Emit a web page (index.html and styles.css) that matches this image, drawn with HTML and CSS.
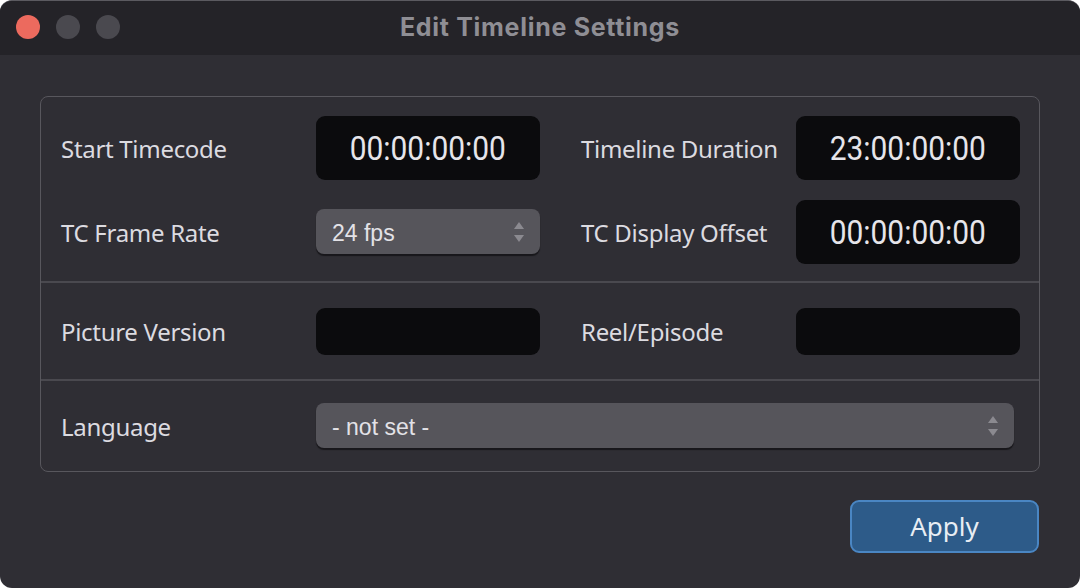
FILE: index.html
```html
<!DOCTYPE html>
<html>
<head>
<meta charset="utf-8">
<link rel="stylesheet" href="styles.css">
</head>
<body>
<div class="window">
  <div class="titlebar">
    <div class="lights">
      <span class="light red"></span>
      <span class="light"></span>
      <span class="light"></span>
    </div>
    <div class="title">Edit Timeline Settings</div>
  </div>
  <div class="content">
    <div class="panel">
      <div class="section grid two-rows">
        <div class="label">Start Timecode</div>
        <div class="tc big"><span class="digits">00:00:00:00</span></div>
        <div class="label right">Timeline Duration</div>
        <div class="tc big"><span class="digits">23:00:00:00</span></div>
        <div class="label">TC Frame Rate</div>
        <div class="select">
          <span class="value">24 fps</span>
          <svg class="arrows" width="12" height="24" viewBox="0 0 12 24"><path d="M6 2 L11 9 L1 9 Z" fill="#8b8a90"/><path d="M1 15 L11 15 L6 22 Z" fill="#8b8a90"/></svg>
        </div>
        <div class="label right">TC Display Offset</div>
        <div class="tc big"><span class="digits">00:00:00:00</span></div>
      </div>
      <div class="section grid mid">
        <div class="label">Picture Version</div>
        <div class="tc small"></div>
        <div class="label right">Reel/Episode</div>
        <div class="tc small"></div>
      </div>
      <div class="section grid last">
        <div class="label">Language</div>
        <div class="select wide">
          <span class="value">- not set -</span>
          <svg class="arrows" width="12" height="24" viewBox="0 0 12 24"><path d="M6 2 L11 9 L1 9 Z" fill="#8b8a90"/><path d="M1 15 L11 15 L6 22 Z" fill="#8b8a90"/></svg>
        </div>
      </div>
    </div>
    <div class="actions">
      <button class="apply">Apply</button>
    </div>
  </div>
</div>
</body>
</html>
```
FILE: styles.css
```css
html, body {
  margin: 0;
  padding: 0;
  background: #ffffff;
}
.window {
  width: 1080px;
  height: 588px;
  background: #2f2e34;
  border-radius: 12px;
  overflow: hidden;
  box-sizing: border-box;
  border-top: 1px solid #5b5a60;
  display: flex;
  flex-direction: column;
}
.titlebar {
  height: 54px;
  background: #242328;
  display: flex;
  align-items: center;
  position: relative;
  flex: none;
}
.lights {
  display: flex;
  gap: 16px;
  padding-left: 16px;
  margin-top: -2px;
}
.light {
  width: 24px;
  height: 24px;
  border-radius: 50%;
  background: #4a494f;
}
.light.red {
  background: #ec6a5e;
}
.title {
  position: absolute;
  left: 0;
  right: 0;
  top: 0;
  bottom: 0;
  display: flex;
  align-items: center;
  justify-content: center;
  font-family: Inter, "Noto Sans", sans-serif;
  font-weight: 700;
  font-size: 25px;
  letter-spacing: 0.7px;
  color: #8f8e94;
  margin-top: -2px;
}
.content {
  padding: 41px 40px 0 40px;
  display: flex;
  flex-direction: column;
}
.panel {
  border: 1px solid #58575d;
  border-radius: 8px;
  height: 376px;
  box-sizing: border-box;
  display: flex;
  flex-direction: column;
}
.section {
  padding: 0 19px 0 20px;
  box-sizing: border-box;
}
.section + .section {
  border-top: 2px solid #4a494f;
}
.grid {
  display: grid;
  grid-template-columns: 255px 224px 1fr 224px;
  align-items: center;
}
.two-rows {
  height: 184px;
  row-gap: 20px;
  align-content: center;
  padding-top: 2px;
}
.mid {
  height: 98px;
  padding-top: 1px;
}
.last {
  flex: 1;
  grid-template-columns: 255px 1fr;
  padding-right: 25px;
}
.label {
  font-family: "Noto Sans", "Open Sans", sans-serif;
  font-size: 24px;
  color: #dcdbe0;
  letter-spacing: -0.3px;
}
.label.right {
  padding-left: 41px;
}
.tc {
  background: #0b0b0d;
  border-radius: 9px;
  color: #e6e5ea;
  font-family: Roboto, "DejaVu Sans", sans-serif;
  font-size: 34px;
  display: flex;
  align-items: center;
  justify-content: center;
}
.digits {
  display: inline-block;
  transform: scaleX(0.88);
}
.tc.big {
  height: 64px;
}
.tc.small {
  height: 47px;
}
.select {
  height: 45px;
  background: #56555b;
  border-radius: 8px;
  box-shadow: 0 2px 1px #18171b;
  display: flex;
  align-items: center;
  justify-content: space-between;
  padding: 0 15px 0 16px;
  box-sizing: border-box;
  font-family: "Liberation Sans", Arial, sans-serif;
  font-size: 23px;
  color: #e3e2e7;
  margin-top: -1px;
}
.value {
  padding-top: 3px;
}
.arrows {
  display: block;
}
.actions {
  display: flex;
  justify-content: flex-end;
  padding-top: 28px;
  padding-right: 1px;
}
.apply {
  width: 189px;
  height: 53px;
  background: #2d5b89;
  border: 2px solid #4a86c3;
  border-radius: 9px;
  color: #e8edf3;
  font-family: "Noto Sans", sans-serif;
  font-size: 26px;
  padding: 0;
  padding-bottom: 2px;
}
```
